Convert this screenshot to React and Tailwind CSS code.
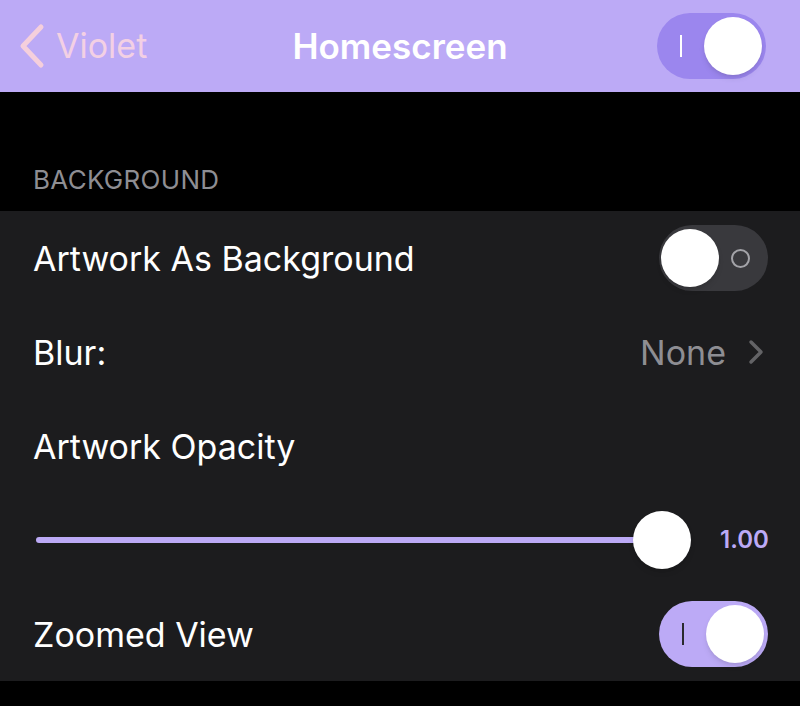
import React from 'react';

const Toggle = ({ on, dark }) => {
    const track = on ? (dark ? 'bg-[#bcaaf6]' : 'bg-[#9b86ee]') : 'bg-[#39393d]';
    return (
        <div className={`relative w-[109px] h-[66px] rounded-full ${track}`}>
            {on ? (
                <>
                    <span className={`absolute left-[23px] top-[22px] w-[2px] h-[22px] ${dark ? 'bg-[#2a2a2e]' : 'bg-white'}`} />
                    <span className="absolute right-[4px] top-[4px] w-[58px] h-[58px] rounded-full bg-white shadow-md" />
                </>
            ) : (
                <>
                    <span className="absolute left-[2px] top-[4px] w-[58px] h-[58px] rounded-full bg-white shadow-md" />
                    <span className="absolute left-[72px] top-[24px] w-[19px] h-[19px] rounded-full border-2 border-[#a3a3a8]" />
                </>
            )}
        </div>
    );
};

const App = () => {
    return (
        <div className="w-[800px] h-[706px] bg-black overflow-hidden" style={{ fontFamily: 'Inter, "Noto Sans", sans-serif' }}>
            <div className="h-[92px] bg-[#bcaaf6] flex items-center justify-between pl-[18px] pr-[34px] relative">
                <div className="flex items-center gap-[10px]">
                    <svg width="28" height="46" viewBox="0 0 28 46">
                        <path d="M23 4 L5 23 L23 42" fill="none" stroke="#f5cfdc" strokeWidth="5" strokeLinecap="round" strokeLinejoin="round" />
                    </svg>
                    <span className="text-[34px] text-[#f3d0e4] leading-none">Violet</span>
                </div>
                <span className="absolute left-0 right-0 text-center text-[35px] font-semibold text-white leading-none pointer-events-none">Homescreen</span>
                <Toggle on />
            </div>
            <div className="h-[119px] flex items-end pl-[33px] pb-[12px]">
                <span className="text-[26px] text-[#8e8e93] tracking-[0.3px]">BACKGROUND</span>
            </div>
            <div className="bg-[#1c1c1e]">
                <div className="h-[94px] flex items-center justify-between pl-[33px] pr-[32px]">
                    <span className="text-[34px] text-white">Artwork As Background</span>
                    <Toggle on={false} />
                </div>
                <div className="h-[94px] flex items-center justify-between pl-[33px] pr-[36px]">
                    <span className="text-[34px] text-white">Blur:</span>
                    <div className="flex items-center gap-[22px]">
                        <span className="text-[34px] text-[#8e8e93]">None</span>
                        <svg width="16" height="26" viewBox="0 0 16 26">
                            <path d="M3 3 L13 13 L3 23" fill="none" stroke="#636366" strokeWidth="3.5" strokeLinecap="round" strokeLinejoin="round" />
                        </svg>
                    </div>
                </div>
                <div className="h-[94px] flex items-center pl-[33px]">
                    <span className="text-[34px] text-white">Artwork Opacity</span>
                </div>
                <div className="h-[94px] flex items-center pl-[36px]">
                    <div className="relative w-[626px] h-[58px] flex items-center">
                        <div className="w-full h-[6px] rounded-full bg-[#bcaaf6]" />
                        <span className="absolute right-[-29px] top-0 w-[58px] h-[58px] rounded-full bg-white shadow-md" />
                    </div>
                    <span className="ml-[58px] text-[24px] font-semibold text-[#bcaaf6] whitespace-nowrap">1.00</span>
                </div>
                <div className="h-[94px] flex items-center justify-between pl-[33px] pr-[32px]">
                    <span className="text-[34px] text-white">Zoomed View</span>
                    <Toggle on dark />
                </div>
            </div>
        </div>
    );
};

export default App;
